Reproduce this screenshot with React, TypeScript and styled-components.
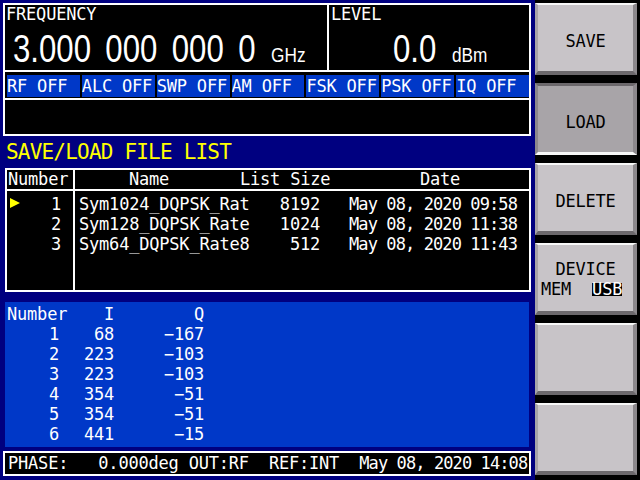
import React from 'react'
import styled, { createGlobalStyle } from 'styled-components'

const GlobalStyle = createGlobalStyle`
  html, body {
    margin: 0;
    padding: 0;
    background: #000;
  }
  #root {
    width: 640px;
    height: 480px;
    overflow: hidden;
  }
`

const mono = `'DejaVu Sans Mono', 'Liberation Mono', monospace`
const sans = `'Liberation Sans', Arial, sans-serif`

const NAVY = '#000080'
const BLUE = '#0038c8'
const YELLOW = '#ffff00'

const Screen = styled.div`
  display: flex;
  width: 640px;
  height: 480px;
  background: #000;
  color: #fff;
  font-family: ${mono};
  font-size: 17px;
  line-height: 17px;
  letter-spacing: -0.2px;
  white-space: pre;
`

const Main = styled.div`
  box-sizing: border-box;
  width: 535px;
  height: 480px;
  padding: 3px 4px 0 3px;
  background: ${NAVY};
  display: flex;
  flex-direction: column;
`

const TopPanel = styled.div`
  box-sizing: border-box;
  height: 133px;
  border: 2px solid #fff;
  background: #000;
  display: flex;
  flex-direction: column;
`

const ReadoutRow = styled.div`
  display: flex;
  height: 65px;
`

const FreqCell = styled.div`
  width: 322px;
  border-right: 2px solid #fff;
`

const LevelCell = styled.div`
  flex: 1;
`

const Label = styled.div<{ $pad: number }>`
  padding: 1px 0 0 ${p => p.$pad}px;
  line-height: 17px;
`

const ValueRow = styled.div<{ $indent: number }>`
  display: flex;
  align-items: baseline;
  margin: 7px 0 0 ${p => p.$indent}px;
  font-family: ${sans};
  letter-spacing: 0;
  transform: scaleX(0.82);
  transform-origin: left;
`

const Value = styled.span`
  font-size: 38px;
  line-height: 38px;
  word-spacing: 7px;
`

const Unit = styled.span`
  font-size: 21px;
  line-height: 21px;
  margin-left: 19px;
`

const ChipRow = styled.div`
  display: flex;
  gap: 2px;
  height: 22px;
  padding: 3px 0 1px 2px;
  border-top: 2px solid #fff;
  border-bottom: 2px solid #fff;
`

const Chip = styled.div`
  flex: 1;
  height: 22px;
  line-height: 22px;
  background: ${BLUE};
  overflow: hidden;
`

const MessageArea = styled.div`
  flex: 1;
`

const Title = styled.div`
  height: 32px;
  line-height: 32px;
  padding-left: 3px;
  font-size: 21px;
  letter-spacing: -0.8px;
  color: ${YELLOW};
`

const FileBox = styled.div`
  box-sizing: border-box;
  height: 124px;
  margin-left: 2px;
  border: 2px solid #fff;
  background: #000;
  display: flex;
`

const NumberCol = styled.div`
  width: 66px;
  border-right: 2px solid #fff;
`

const ListCol = styled.div`
  flex: 1;
`

const HeadCell = styled.div<{ $pad?: number }>`
  height: 19px;
  line-height: 19px;
  padding-left: ${p => p.$pad ?? 0}px;
`

const NumberHead = styled(HeadCell)`
  border-bottom: 2px solid #fff;
`

const ListHead = styled.div`
  display: grid;
  grid-template-columns: 165px 90px 1fr;
  border-bottom: 2px solid #fff;
`

const Rows = styled.div`
  padding-top: 3px;
`

const NumberRow = styled.div`
  display: flex;
  justify-content: space-between;
  height: 20px;
  line-height: 20px;
  padding: 0 12px 0 3px;
`

const Marker = styled.span<{ $on: boolean }>`
  width: 0;
  height: 0;
  margin-top: 4px;
  border-top: 5px solid transparent;
  border-bottom: 5px solid transparent;
  border-left: 10px solid ${p => (p.$on ? YELLOW : 'transparent')};
`

const FileRow = styled.div`
  display: grid;
  grid-template-columns: 185px 60px 1fr;
  height: 20px;
  line-height: 20px;
`

const NameCell = styled.span`
  padding-left: 4px;
`

const SizeCell = styled.span`
  text-align: right;
`

const DateCell = styled.span`
  padding-left: 29px;
  letter-spacing: -0.9px;
`

const IQPanel = styled.div`
  box-sizing: border-box;
  height: 145px;
  margin: 10px 2px 0 2px;
  padding-top: 2px;
  background: ${BLUE};
`

const IQRow = styled.div`
  display: grid;
  grid-template-columns: 54px 55px 90px;
  height: 20px;
  line-height: 20px;
  text-align: right;
`

const IQHeadFirst = styled.span`
  text-align: left;
  padding-left: 2px;
`

const StatusBar = styled.div`
  box-sizing: border-box;
  height: 25px;
  margin-top: 4px;
  border: 2px solid #fff;
  background: #000;
  line-height: 21px;
  padding-left: 3px;
`

const StatusDate = styled.span`
  letter-spacing: -0.9px;
`

const Side = styled.div`
  box-sizing: border-box;
  width: 105px;
  height: 480px;
  padding: 3px 3px 0 0;
  display: flex;
  flex-direction: column;
  gap: 8px;
`

const SoftKey = styled.div<{ $pressed?: boolean }>`
  box-sizing: border-box;
  height: 72px;
  padding-top: 6px;
  display: flex;
  flex-direction: column;
  align-items: center;
  justify-content: center;
  color: #000;
  background: ${p => (p.$pressed ? '#a8a4a8' : '#c8c4c8')};
  border-style: solid;
  border-width: ${p => (p.$pressed ? '3px 4px 3px 3px' : '2px 4px 4px 3px')};
  border-color: ${p =>
    p.$pressed
      ? '#6c686c #8c888c #f8f8f8 #8c888c'
      : '#f8f8f8 #8c888c #6c686c #a8a4a8'};
`

const DeviceKey = styled(SoftKey)`
  justify-content: flex-start;
  padding-top: 16px;
`

const DeviceOptions = styled.div`
  align-self: stretch;
  display: flex;
  gap: 21px;
  margin-top: 5px;
  padding-left: 3px;
  line-height: 13px;
`

const Option = styled.span<{ $active?: boolean }>`
  display: inline-block;
  height: 13px;
  line-height: 13px;
  background: ${p => (p.$active ? '#000' : 'transparent')};
  color: ${p => (p.$active ? '#fff' : '#000')};
`

const chips = ['RF OFF', 'ALC OFF', 'SWP OFF', 'AM OFF', 'FSK OFF', 'PSK OFF', 'IQ OFF']

const files = [
  { no: 1, name: 'Sym1024_DQPSK_Rat', size: 8192, date: 'May 08, 2020 09:58' },
  { no: 2, name: 'Sym128_DQPSK_Rate', size: 1024, date: 'May 08, 2020 11:38' },
  { no: 3, name: 'Sym64_DQPSK_Rate8', size: 512, date: 'May 08, 2020 11:43' },
]

const iq = [
  [1, 68, -167],
  [2, 223, -103],
  [3, 223, -103],
  [4, 354, -51],
  [5, 354, -51],
  [6, 441, -15],
]

const fmt = (n: number) => (n < 0 ? '\u2212' + Math.abs(n) : String(n))

const App = () => {
  return (
    <Screen>
      <GlobalStyle />
      <Main>
        <TopPanel>
          <ReadoutRow>
            <FreqCell>
              <Label $pad={1}>FREQUENCY</Label>
              <ValueRow $indent={8}>
                <Value>3.000 000 000 0</Value>
                <Unit>GHz</Unit>
              </ValueRow>
            </FreqCell>
            <LevelCell>
              <Label $pad={2}>LEVEL</Label>
              <ValueRow $indent={64}>
                <Value>0.0</Value>
                <Unit>dBm</Unit>
              </ValueRow>
            </LevelCell>
          </ReadoutRow>
          <ChipRow>
            {chips.map(c => (
              <Chip key={c}>{c}</Chip>
            ))}
          </ChipRow>
          <MessageArea />
        </TopPanel>

        <Title>SAVE/LOAD FILE LIST</Title>

        <FileBox>
          <NumberCol>
            <NumberHead $pad={1}>Number</NumberHead>
            <Rows>
              {files.map(f => (
                <NumberRow key={f.no}>
                  <Marker $on={f.no === 1} />
                  <span>{f.no}</span>
                </NumberRow>
              ))}
            </Rows>
          </NumberCol>
          <ListCol>
            <ListHead>
              <HeadCell $pad={54}>Name</HeadCell>
              <HeadCell>List Size</HeadCell>
              <HeadCell $pad={90}>Date</HeadCell>
            </ListHead>
            <Rows>
              {files.map(f => (
                <FileRow key={f.no}>
                  <NameCell>{f.name}</NameCell>
                  <SizeCell>{f.size}</SizeCell>
                  <DateCell>{f.date}</DateCell>
                </FileRow>
              ))}
            </Rows>
          </ListCol>
        </FileBox>

        <IQPanel>
          <IQRow>
            <IQHeadFirst>Number</IQHeadFirst>
            <span>I</span>
            <span>Q</span>
          </IQRow>
          {iq.map(([n, i, q]) => (
            <IQRow key={n}>
              <span>{n}</span>
              <span>{fmt(i)}</span>
              <span>{fmt(q)}</span>
            </IQRow>
          ))}
        </IQPanel>

        <StatusBar>
          {'PHASE:   0.000deg OUT:RF  REF:INT  '}
          <StatusDate>May 08, 2020 14:08</StatusDate>
        </StatusBar>
      </Main>

      <Side>
        <SoftKey>SAVE</SoftKey>
        <SoftKey $pressed>LOAD</SoftKey>
        <SoftKey>DELETE</SoftKey>
        <DeviceKey>
          <span>DEVICE</span>
          <DeviceOptions>
            <Option>MEM</Option>
            <Option $active>USB</Option>
          </DeviceOptions>
        </DeviceKey>
        <SoftKey />
        <SoftKey />
      </Side>
    </Screen>
  )
}

export default App
